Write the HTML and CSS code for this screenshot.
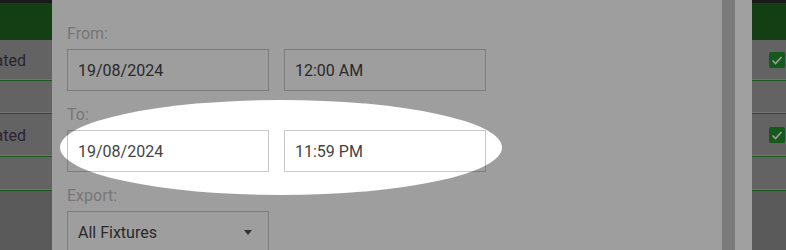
FILE: index.html
```html
<!DOCTYPE html>
<html>
<head>
  <title>Export Fixtures</title>
  <link rel="stylesheet" href="styles.css">
</head>
<body>
  <div class="screen">
    <!-- page behind the dialog, left edge -->
    <div class="page page-left">
      <div class="topbar"></div>
      <div class="thead"></div>
      <div class="trow r1"><span class="status">Activated</span></div>
      <div class="trow r2"></div>
      <div class="trow r3"><span class="status">Activated</span></div>
      <div class="trow r4"></div>
    </div>

    <!-- Export dialog -->
    <div class="modal">
      <form class="modal-body">
        <label class="field-label">From:</label>
        <div class="field-row">
          <input class="field" type="text" value="19/08/2024" readonly />
          <input class="field" type="text" value="12:00 AM" readonly />
        </div>

        <label class="field-label">To:</label>
        <div class="field-row">
          <input class="field" type="text" value="19/08/2024" readonly />
          <input class="field" type="text" value="11:59 PM" readonly />
        </div>

        <label class="field-label">Export:</label>
        <div class="field-row">
          <div class="field select">
            <span>All Fixtures</span>
            <span class="caret"></span>
          </div>
        </div>
      </form>
      <div class="spotlight"></div>
    </div>

    <div class="track"></div>
    <div class="gutter"></div>

    <!-- page behind the dialog, right edge -->
    <div class="page page-right">
      <div class="topbar"></div>
      <div class="thead"></div>
      <div class="trow r1"><span class="check"><svg viewBox="0 0 16 16" width="16" height="16"><polyline points="3.5,8.5 6.5,11.5 12.5,5" /></svg></span></div>
      <div class="trow r2"></div>
      <div class="trow r3"><span class="check"><svg viewBox="0 0 16 16" width="16" height="16"><polyline points="3.5,8.5 6.5,11.5 12.5,5" /></svg></span></div>
      <div class="trow r4"></div>
    </div>
  </div>
</body>
</html>
```

FILE: styles.css
```css
body {
  margin: 0;
  font-family: Roboto, "Liberation Sans", Arial, sans-serif;
}

.screen {
  display: flex;
  width: 786px;
  height: 250px;
  overflow: hidden;
}

/* background page (already dimmed by the backdrop) */
.page {
  background-color: #5a5a5a;
  display: flex;
  flex-direction: column;
}

.page-left {
  width: 52px;
}

.page-right {
  width: 34px;
}

.topbar {
  height: 3px;
  background-color: #1b1b1b;
}

.thead {
  height: 37px;
  background-color: #143f15;
}

.trow {
  box-sizing: border-box;
  display: flex;
  align-items: center;
  background-color: #636363;
  border-bottom: 1px solid #1d561e;
  box-shadow: inset 0 -1px 0 #747474;
}

.r1 { height: 41px; }
.r2 { height: 33px; }
.r3 { height: 43px; }
.r4 { height: 34px; }

.page-left .trow {
  justify-content: flex-end;
  padding-right: 26px;
  white-space: nowrap;
}

.page-right .trow {
  justify-content: flex-end;
  padding-right: 1px;
}

.status {
  font-size: 16px;
  color: #2c2434;
}

.check {
  display: block;
  width: 16px;
  height: 16px;
  border-radius: 2px;
  background-color: #145a1c;
}

.check svg {
  display: block;
  fill: none;
  stroke: #9c9c9c;
  stroke-width: 1.6;
}

/* dialog */
.modal {
  position: relative;
  width: 670px;
  background-color: #fff;
  overflow: hidden;
}

.modal-body {
  margin: 0;
  padding: 24px 15px 0;
}

.field-label {
  display: block;
  font-size: 16px;
  line-height: 20px;
  color: #c0c0c0;
  margin-bottom: 5px;
}

.field-row {
  display: flex;
  gap: 15px;
  margin-bottom: 14px;
}

.field {
  box-sizing: border-box;
  width: 202px;
  height: 42px;
  margin: 0;
  padding: 0 10px;
  border: 1px solid #c8c8c8;
  border-radius: 0;
  background: #fff;
  font-family: inherit;
  font-size: 16px;
  color: #444;
  outline: none;
}

.select {
  display: flex;
  align-items: center;
  justify-content: space-between;
  padding-right: 16px;
}

.caret {
  width: 0;
  height: 0;
  border-left: 4.5px solid transparent;
  border-right: 4.5px solid transparent;
  border-top: 5px solid #555;
}

/* highlight ellipse over the "To" fields */
.spotlight {
  position: absolute;
  left: 8px;
  top: 100px;
  width: 442px;
  height: 95px;
  border-radius: 50%;
  box-shadow: 0 0 0 1200px rgba(0, 0, 0, 0.38);
}

.track {
  width: 13px;
  background-color: #7a7a7a;
}

.gutter {
  width: 17px;
  background-color: #a0a0a0;
}
```
